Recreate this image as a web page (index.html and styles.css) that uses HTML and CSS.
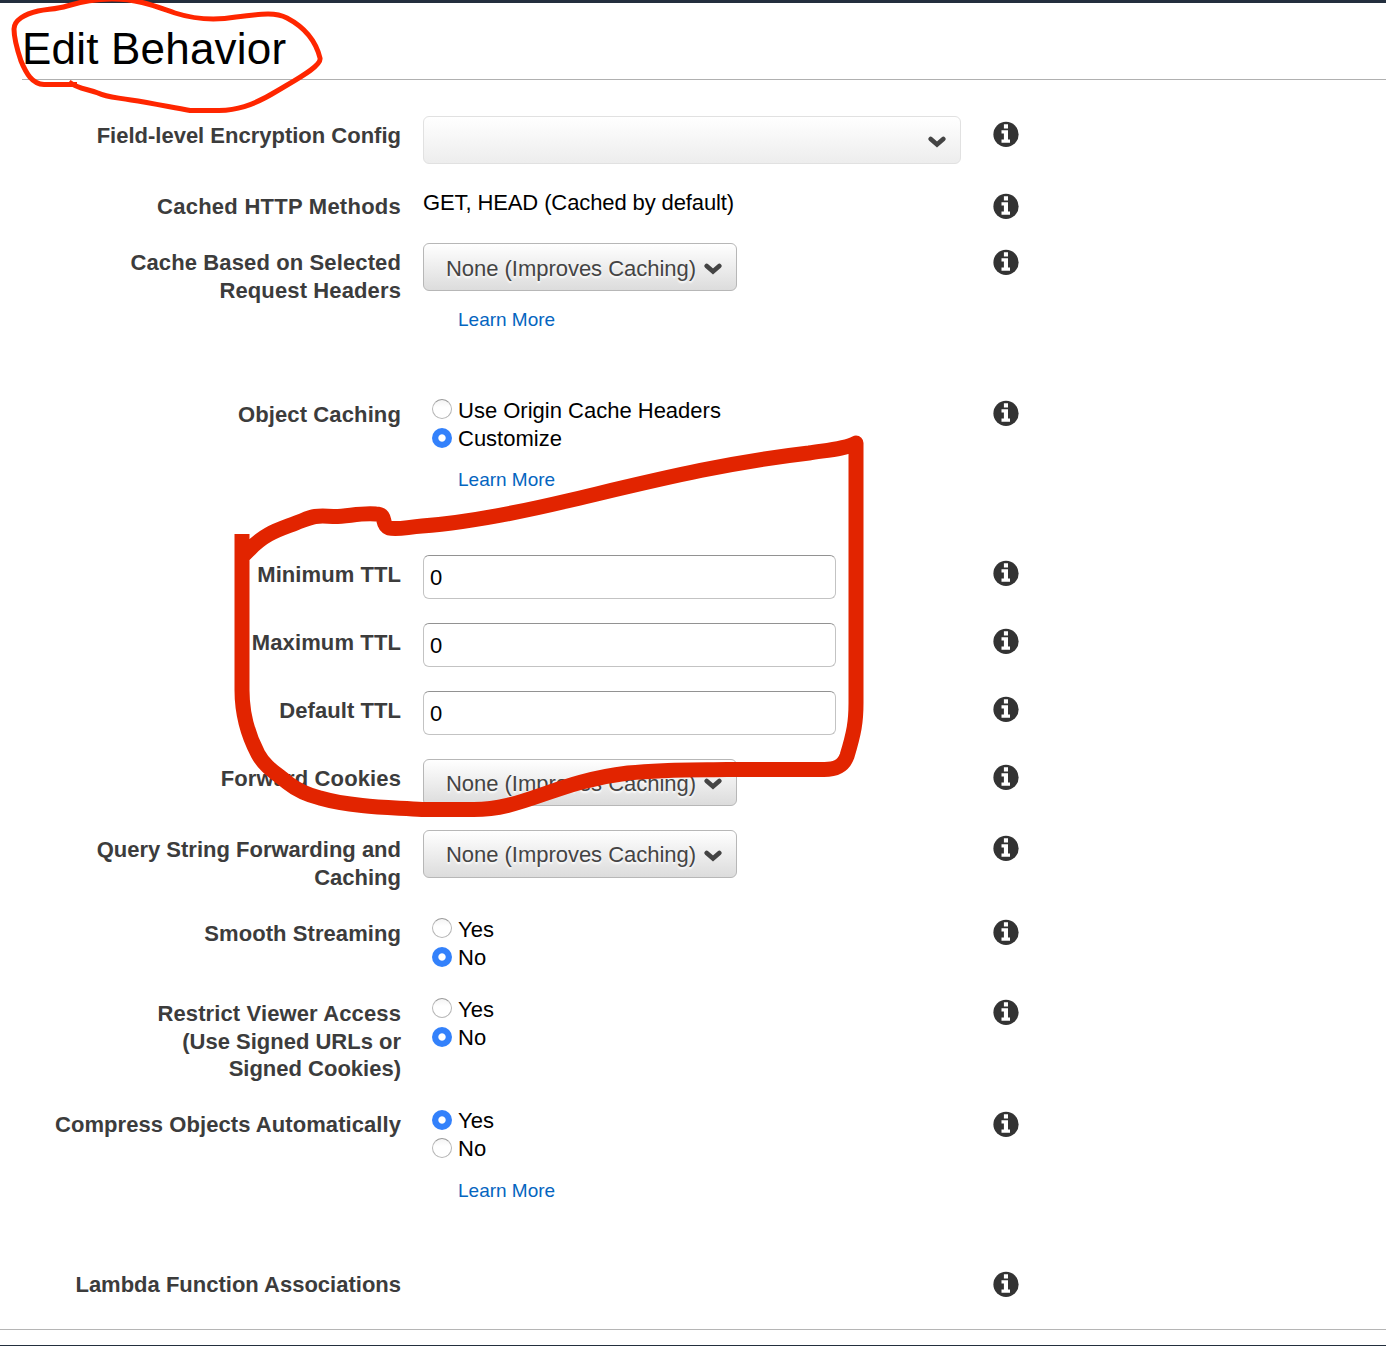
FILE: index.html
```html
<!DOCTYPE html>
<html lang="en">
<head>
<meta charset="utf-8">
<title>Edit Behavior</title>
<link rel="stylesheet" href="styles.css">
</head>
<body>
<svg width="0" height="0" class="defs" aria-hidden="true">
  <symbol id="info" viewBox="0 0 26 27"><circle cx="13" cy="13.400" r="12.6" fill="#333"/><path fill="#fff" d="M10.900 3.300h4.100v4.100h-4.100zM8.500 9.300h6.500v9.300h2v3.200H8.500v-3.200h2.400v-6.200H8.500z"/></symbol>
  <symbol id="chevron" viewBox="0 0 18 12"><path d="M2.700 3 9 8.500 15.300 3" fill="none" stroke="#444" stroke-width="4.600" stroke-linecap="round"/></symbol>
</svg>
<div class="page">
  <div class="topbar"></div>
  <header class="header"><h1 class="title">Edit Behavior</h1></header>
  <main class="form">
    <section class="row h72"><div class="label tight">Field-level Encryption Config</div><div class="control"><div class="select select-wide"><svg class="chevron"><use href="#chevron"/></svg></div></div><svg class="info"><use href="#info"/></svg></section>
    <section class="row h56"><div class="label loose">Cached HTTP Methods</div><div class="control"><div class="value">GET, HEAD (Cached by default)</div></div><svg class="info"><use href="#info"/></svg></section>
    <section class="row h151"><div class="label">Cache Based on Selected<br>Request Headers</div><div class="control"><div class="select select-raised"><span>None (Improves Caching)</span><svg class="chevron"><use href="#chevron"/></svg></div><a class="link">Learn More</a></div><svg class="info"><use href="#info"/></svg></section>
    <section class="row h160"><div class="label">Object Caching</div><div class="control"><div class="option"><i class="radio"></i><span>Use Origin Cache Headers</span></div><div class="option"><i class="radio on"></i><span>Customize</span></div><a class="link">Learn More</a></div><svg class="info"><use href="#info"/></svg></section>
    <section class="row h68"><div class="label medium">Minimum TTL</div><div class="control"><input class="input" value="0"></div><svg class="info"><use href="#info"/></svg></section>
    <section class="row h68"><div class="label">Maximum TTL</div><div class="control"><input class="input" value="0"></div><svg class="info"><use href="#info"/></svg></section>
    <section class="row h68"><div class="label medium">Default TTL</div><div class="control"><input class="input" value="0"></div><svg class="info"><use href="#info"/></svg></section>
    <section class="row h71"><div class="label">Forward Cookies</div><div class="control"><div class="select select-short"><span>None (Improves Caching)</span><svg class="chevron"><use href="#chevron"/></svg></div></div><svg class="info"><use href="#info"/></svg></section>
    <section class="row h84"><div class="label tight">Query String Forwarding and<br>Caching</div><div class="control"><div class="select"><span>None (Improves Caching)</span><svg class="chevron"><use href="#chevron"/></svg></div></div><svg class="info"><use href="#info"/></svg></section>
    <section class="row h80"><div class="label medium">Smooth Streaming</div><div class="control"><div class="option"><i class="radio"></i><span>Yes</span></div><div class="option"><i class="radio on"></i><span>No</span></div></div><svg class="info"><use href="#info"/></svg></section>
    <section class="row h112"><div class="label"><span>Restrict Viewer Access</span><br><span class="tight">(Use Signed URLs or<br>Signed Cookies)</span></div><div class="control"><div class="option"><i class="radio"></i><span>Yes</span></div><div class="option"><i class="radio on"></i><span>No</span></div></div><svg class="info"><use href="#info"/></svg></section>
    <section class="row h160 compress"><div class="label medium">Compress Objects Automatically</div><div class="control"><div class="option"><i class="radio on"></i><span>Yes</span></div><div class="option"><i class="radio"></i><span>No</span></div><a class="link">Learn More</a></div><svg class="info"><use href="#info"/></svg></section>
    <section class="row h64"><div class="label tight">Lambda Function Associations</div><div class="control"></div><svg class="info"><use href="#info"/></svg></section>
  </main>
  <footer class="footer"></footer>
  <svg class="ink" viewBox="0 0 1386 1346" fill="none">
    <path stroke="#ff2600" stroke-width="5" stroke-linejoin="round" d="M77 84.500H44C32 84 26 73 21 61C17 49 14 38 14 29C14 20 25 14 38 11C49 9 57 9 67 6C83 1 94-1 112-1C140-1 157 7 175 13C197 20 219 20 236 17C256 15 273 11 287 18C306 28 316 42 320 58C322 66 297 79 277 91C251 107 235 110 219 110.500H190C170 107 151 103 131 100C113 97 106 97 98 93C88 89 78 89 69 82"/>
    <path stroke="#e22400" stroke-width="15" stroke-linejoin="round" d="M242 534V690C242 717 249 737 258 754C265 767 276 773 288 783C298 791 308 795 320 798C334 802 348 804 362 805.500C384 808 405 808 422 809.500H470C523 811 553 782 628 773C668 769 701 770 727 769.500H822C835 770 843 767 847 756C854 733 856 722 856 703V443C845 449 828 450 809 453C722 463 652 481 567 501C512 514 463 523 422 526C405 527.500 397 530 389 528C380 524 388 514 376 514C360 512.500 346 517 333 516.500C313 515 312 517 296 523C278 530 265 533 249 550L244 555"/>
  </svg>
</div>
</body>
</html>
```
FILE: styles.css
```css
* { box-sizing: border-box; }
body { margin: 0; background: #fff; font: 22px/28px "Liberation Sans", Arial, sans-serif; color: #000; }
.defs { position: absolute; }
.page { position: relative; height: 1346px; overflow: hidden; border-bottom: 1px solid #232f3e; }
.topbar { height: 3px; background: #232f3e; }
.header { height: 77px; margin-left: 22px; border-bottom: 1px solid #b0b0b0; }
.title { margin: 0; padding-top: 20px; font-size: 44px; line-height: 52px; font-weight: 400; letter-spacing: .2px; white-space: nowrap; }
.form { padding-top: 35px; }
.row { display: grid; grid-template-columns: 401px 570px 26px; align-items: start; }
.control { padding-left: 22px; }
.label { padding-top: 7px; text-align: right; font-weight: 700; color: #3c3c3c; white-space: nowrap; line-height: 27.7px; letter-spacing: .12px; }
.tight { letter-spacing: 0; }
.medium { letter-spacing: .07px; }
.loose { letter-spacing: .25px; }
.h56 .label, .h151 .label, .h64 .label, .compress .label { padding-top: 6px; }
.info { width: 26px; height: 27px; margin: 6px 0 0 22px; }
.h56 { height: 56px; } .h64 { height: 64px; } .h68 { height: 68px; } .h71 { height: 71px; } .h72 { height: 72px; }
.h80 { height: 80px; } .h84 { height: 84px; } .h112 { height: 112px; } .h151 { height: 151px; } .h160 { height: 160px; }
.value { padding-top: 2px; white-space: nowrap; letter-spacing: -.11px; }
.select { display: flex; align-items: center; width: 314px; height: 48px; margin-top: 1px; padding: 2px 14px 0 22px; justify-content: space-between; border: 1px solid #b7b7b7; border-radius: 6px; background: linear-gradient(#fff, #dcdcdc); color: #444; letter-spacing: -.03px; white-space: nowrap; text-shadow: 0 2px 2px #fff; }
.select-wide { width: 538px; border-color: #e1e1e1; background: linear-gradient(#fff, #ededed); justify-content: flex-end; }
.select-raised { margin-top: 0; padding-top: 3px; }
.select-short { height: 47px; }
.chevron { width: 18px; height: 12px; margin-top: 1px; }
.link { display: block; margin: 15px 0 0 35px; font-size: 19px; line-height: 28px; color: #0565c0; white-space: nowrap; }
.input { display: block; width: 413px; height: 44px; margin: 1px 0 0; padding: 1px 6px 0; border: 1px solid #c3c3c3; border-top-color: #929292; border-radius: 6px; background: #fff; font: inherit; color: #000; }
.option { display: flex; align-items: center; height: 28px; padding-left: 9px; gap: 6px; white-space: nowrap; }
.option:first-child { margin-top: 2px; }
.option:first-child .radio { margin-bottom: 2px; }
.option span { padding-top: 2px; }
.option + .link { margin-top: 14px; }
.compress .option span { padding-top: 0; }
.compress .option .radio { margin-bottom: 2px; }
.radio { width: 20px; height: 20px; border: 1px solid #b7b7b7; border-top-color: #999; border-radius: 50%; background: linear-gradient(#f4f4f4, #fff 40%); }
.radio.on { border: 0; background: radial-gradient(circle, #fff 3.2px, #3381fb 4.1px); }
.footer { height: 16px; border-top: 1px solid #b5b5b5; }
.ink { position: absolute; left: 0; top: 0; width: 1386px; height: 1346px; pointer-events: none; }
```
